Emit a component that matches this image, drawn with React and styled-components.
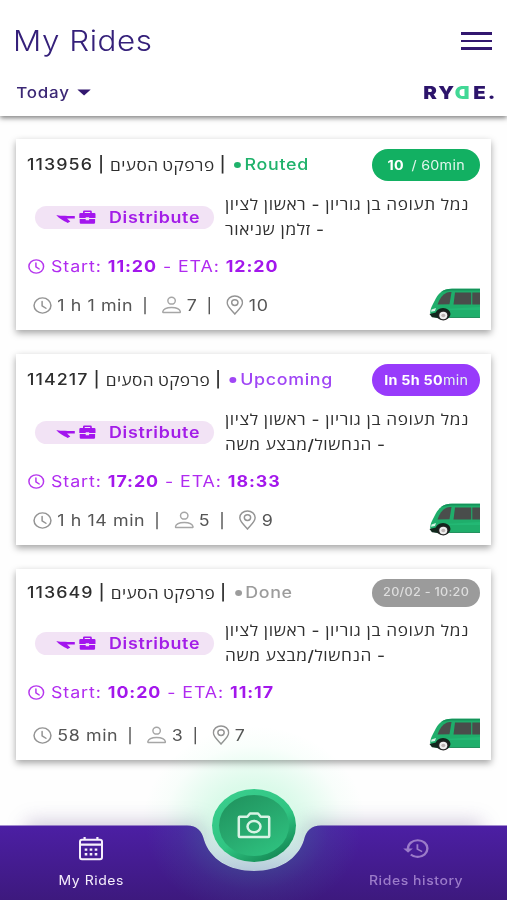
import React from "react";
import styled, { createGlobalStyle } from "styled-components";
import { MdHistory } from "react-icons/md";

const RIDES = [
  {
    id: "113956",
    company: "פרפקט הסעים",
    status: "Routed",
    statusColor: "#1fb26b",
    pillColor: "#12b062",
    pillBold: "10",
    pillGap: 3,
    pillText: " / 60min",
    route: ["נמל תעופה בן גוריון - ראשון לציון", "- זלמן שניאור"],
    start: "11:20",
    eta: "12:20",
    duration: "1 h 1 min",
    passengers: "7",
    stops: "10",
  },
  {
    id: "114217",
    company: "פרפקט הסעים",
    status: "Upcoming",
    statusColor: "#a046f5",
    pillColor: "#983bfb",
    pillBold: "In 5h 50",
    pillGap: 0,
    pillText: "min",
    route: ["נמל תעופה בן גוריון - ראשון לציון", "- הנחשול/מבצע משה"],
    start: "17:20",
    eta: "18:33",
    duration: "1 h 14 min",
    passengers: "5",
    stops: "9",
  },
  {
    id: "113649",
    company: "פרפקט הסעים",
    status: "Done",
    statusColor: "#9c9c9c",
    pillColor: "#9b9b9b",
    pillText: "20/02 - 10:20",
    small: true,
    route: ["נמל תעופה בן גוריון - ראשון לציון", "- הנחשול/מבצע משה"],
    start: "10:20",
    eta: "11:17",
    duration: "58 min",
    passengers: "3",
    stops: "7",
  },
];

const GlobalStyle = createGlobalStyle`
  * {
    box-sizing: border-box;
  }

  body {
    margin: 0;
    background: #fff;
    font-family: Inter, "Open Sans", "Liberation Sans", sans-serif;
  }

  svg {
    display: block;
    flex: none;
  }
`;

const Screen = styled.div`
  display: flex;
  flex-direction: column;
  width: 507px;
  height: 900px;
  overflow: hidden;
  background: #fefefe;
`;

const Header = styled.header`
  height: 116px;
  padding: 22px 13px 0 14px;
  background: #fff;
  box-shadow: 0 2px 5px rgba(0, 0, 0, 0.5);
`;

const HeaderRow = styled.div`
  display: flex;
  align-items: center;
  justify-content: space-between;
  height: ${(props) => props.$height}px;
`;

const Title = styled.h1`
  margin: 0 0 0 -1px;
  color: #35207a;
  font-size: 28px;
  font-weight: 300;
  letter-spacing: 0.5px;
  transform: scaleX(1.12);
  transform-origin: left;
`;

const MenuButton = styled.div`
  display: flex;
  flex-direction: column;
  gap: 5px;
  margin-right: 2px;

  span {
    width: 31px;
    height: 2.6px;
    background: #32176f;
  }
`;

const DayPicker = styled.div`
  display: flex;
  align-items: center;
  gap: 7px;
  padding-left: 2px;
  color: #3b2775;
  font-size: 15px;
  font-weight: 500;
  letter-spacing: 0.7px;
  transform: scaleX(1.13);
  transform-origin: left;
`;

const Logo = styled.div`
  display: flex;
  margin-right: -3px;
  color: #2c146b;
  font-size: 17.5px;
  font-weight: 900;
  letter-spacing: 1.7px;
  transform: scaleX(1.17);
  transform-origin: right;
`;

const FlippedLetter = styled.span`
  color: #42d896;
  letter-spacing: 0;
  margin-right: 2.6px;
  margin-left: -0.6px;
  transform: scaleX(-1);
`;

const RideList = styled.main`
  display: flex;
  flex: 1;
  flex-direction: column;
  gap: 24px;
  padding: 23px 16px 0;
`;

const Card = styled.article`
  display: flex;
  flex: none;
  flex-direction: column;
  height: 191px;
  padding: 9.5px 11px 9px;
  background: #fff;
  box-shadow: 0 3px 7px rgba(0, 0, 0, 0.36);
`;

const CardHead = styled.div`
  display: flex;
  align-items: center;
  justify-content: space-between;
`;

const RideName = styled.div`
  display: flex;
  align-items: center;
  color: #2e2e2e;
  font-size: 15.5px;
  font-weight: 500;
  letter-spacing: 0.95px;
  line-height: 20px;
  word-spacing: -0.8px;
  white-space: pre;
  transform: scaleX(1.15);
  transform-origin: left;
`;

const Company = styled.span`
  font-family: "Open Sans", "Liberation Sans", sans-serif;
  font-size: 15px;
  letter-spacing: 0.35px;
`;

const Status = styled.span`
  display: flex;
  align-items: center;
  gap: 3px;
  margin-left: 6.5px;
  color: ${(props) => props.$color};
  letter-spacing: 0.6px;

  &::before {
    content: "";
    width: 6px;
    height: 6px;
    border-radius: 50%;
    background: currentColor;
  }
`;

const Pill = styled.div`
  width: 108px;
  height: ${(props) => (props.$small ? 28 : 32)}px;
  border-radius: 16px;
  background: ${(props) => props.$color};
  color: ${(props) => (props.$small ? "#dedede" : "#e4f6ee")};
  font-size: ${(props) => (props.$small ? 11.5 : 13)}px;
  font-weight: ${(props) => (props.$small ? 500 : 400)};
  line-height: ${(props) => (props.$small ? 27 : 32)}px;
  letter-spacing: 0.25px;
  text-align: center;
  white-space: pre;
`;

const PillText = styled.span`
  display: inline-block;
  transform: scaleX(1.1);

  b {
    margin-right: ${(props) => props.$gap || 0}px;
    color: #fff;
    font-weight: 700;
  }
`;

const RouteRow = styled.div`
  display: flex;
  align-items: center;
  gap: 11px;
  height: 50px;
  margin-top: 12px;
  padding-left: 8px;
`;

const Tag = styled.div`
  display: flex;
  align-items: center;
  width: 179px;
  height: 23px;
  padding-left: 21px;
  border-radius: 12px;
  background: #f2e3f5;
  color: #a31de8;
  font-size: 15.5px;
  font-weight: 600;
  letter-spacing: 0.6px;

  span {
    margin-left: 12.7px;
    transform: scaleX(1.15);
    transform-origin: left;
  }
`;

const Route = styled.div`
  margin-top: -2px;
  color: #303030;
  direction: rtl;
  font-family: Inter, "Open Sans", "Liberation Sans", sans-serif;
  font-size: 15px;
  font-weight: 500;
  line-height: 25px;
  letter-spacing: 0.5px;
  text-align: left;
  white-space: nowrap;
  transform: scaleX(1.15);
  transform-origin: left;
`;

const TimeRow = styled.div`
  display: flex;
  align-items: center;
  gap: 6px;
  height: 20px;
  margin-top: 13.5px;
  padding-left: 1px;
  color: #b02af0;
  font-size: 15.5px;
  letter-spacing: 0.8px;
  white-space: pre;

  div {
    transform: scaleX(1.15);
    transform-origin: left;
  }

  b {
    color: #a317ec;
    font-weight: 700;
  }
`;

const StatsRow = styled.div`
  display: flex;
  align-items: flex-end;
  justify-content: space-between;
  margin-top: auto;
`;

const Stats = styled.div`
  display: flex;
  align-items: center;
  height: 32px;
  margin-left: 6px;
  color: #555;
  font-size: 15.5px;
  letter-spacing: 0.5px;
  transform: scaleX(1.15);
  transform-origin: left;
`;

const StatValue = styled.span`
  margin: 0 7.8px 0 4.7px;
`;

const Divider = styled.span`
  width: 5px;
  margin-right: 12.2px;
  color: #444;
  font-size: 14.5px;
  letter-spacing: 0;
  text-align: center;
`;

const BottomNav = styled.nav`
  position: relative;
  display: grid;
  flex: none;
  grid-template-columns: 182px 1fr 182px;
  height: 75px;
`;

const NavShape = styled.svg`
  position: absolute;
  left: 0;
  bottom: 0;
  pointer-events: none;
`;

const NavItem = styled.div`
  position: relative;
  display: flex;
  flex-direction: column;
  align-items: center;
  padding-top: 11px;
  color: ${(props) => (props.$active ? "#f5eefc" : "#9b7bc9")};
  font-size: 12.5px;
  font-weight: ${(props) => (props.$active ? 400 : 500)};
  letter-spacing: 0.5px;

  svg {
    height: 25px;
  }

  span {
    margin-top: 12px;
    transform: scaleX(1.12);
  }
`;

const ScanButton = styled.div`
  position: absolute;
  top: -36px;
  left: 212px;
  display: flex;
  align-items: center;
  justify-content: center;
  width: 84px;
  height: 73px;
  border-radius: 50%;
  background: linear-gradient(150deg, #3bcf8f, #30c582 55%, #178f59 85%);

  &::before {
    content: "";
    position: absolute;
    inset: 6px 7px;
    border-radius: 50%;
    background: linear-gradient(150deg, #1f905c, #27a76d 45%, #30c783);
  }

  svg {
    position: relative;
  }
`;

const ClockIcon = ({ width, height, strokeWidth, color }) => (
  <svg
    width={width}
    height={height}
    viewBox="0 0 20 20"
    preserveAspectRatio="none"
    fill="none"
    stroke={color}
    strokeWidth={strokeWidth}
    strokeLinecap="round"
    strokeLinejoin="round"
  >
    <circle cx="10" cy="10" r="8.9" />
    <path d="M9.600 5.200v5.300l4 2.800" />
  </svg>
);

const PersonIcon = () => (
  <svg width="17" height="18" viewBox="0 0 20 18" preserveAspectRatio="none" fill="none" stroke="#a6a6a6" strokeWidth="1.5">
    <ellipse cx="10" cy="4.700" rx="3.800" ry="3.400" />
    <path d="M1 15.600c.6-2.600 4.200-4.200 9-4.200s8.400 1.600 9 4.200c.1.700-.3 1-1 1H2c-.7 0-1.100-.3-1-1z" />
  </svg>
);

const PinIcon = () => (
  <svg width="15" height="20" viewBox="0 0 18 20" preserveAspectRatio="none" fill="none" stroke="#949494" strokeWidth="1.500">
    <path d="M9 19C6.500 16 1 11.800 1 7.800 1 3.900 4.600 1 9 1s8 2.900 8 6.800c0 4-5.500 8.200-8 11.200z" />
    <ellipse cx="9" cy="7.600" rx="3.300" ry="2.900" />
  </svg>
);

const TagIcon = () => (
  <svg width="40" height="16" viewBox="0 0 40 16" fill="#a315ee">
    <path d="M.3 5.100c2.500 1 8 .8 18.500 1v2.300H11l3.300 3.200-2.600 1.300C7.500 11.200 2.300 8 .3 5.100z" />
    <path
      fillRule="evenodd"
      d="M27 3V1.700Q27 .5 28.300.5h6.200q1.300 0 1.300 1.200V3h2.500q1.200 0 1.200 1.200v3.900h-6.400V7.200h-3.400v.9h-6.400V4.200Q23.300 3 24.500 3zm1.700 0h5.500V2h-5.500zM23.700 9h6v1.300h3.400V9h6v3.600q0 1.200-1.200 1.200h-13q-1.200 0-1.200-1.200z"
    />
  </svg>
);

const VanIcon = () => (
  <svg width="51" height="33" viewBox="0 0 51 33">
    <path d="M51 .8H23C13 .8 9 6 5.500 13 3 18 1.500 20 1.200 25l1.500 3.500L9 30h42z" fill="#1fae6b" />
    <path d="M51 .8H23C18 .8 15 2 12 4l10-1.500h29z" fill="#14935a" />
    <path d="M4 21.500 51 19v3H8z" fill="#23b874" />
    <path d="M8.500 16.500c2-6 5-10 9-11.800 2-.8 5-.8 5-.8L20.500 16.200z" fill="#4a4e4c" />
    <path d="M26 4.500h16.200v12.100H24.500zM43.300 4.500H51v12.100h-7.700z" fill="#494d4b" />
    <path d="M2.500 21.500 7 20l-1 3-4 .8z" fill="#d5f5e5" />
    <path d="M.5 26 7 24.500 9 30l-6-.7z" fill="#12271d" />
    <ellipse cx="14" cy="26" rx="7.500" ry="6" fill="#14251d" />
    <ellipse cx="14.300" cy="27.500" rx="5.600" ry="5.100" fill="#242424" />
    <ellipse cx="14.300" cy="27.500" rx="4" ry="3.700" fill="#eee" />
    <ellipse cx="14.300" cy="27.500" rx="2" ry="1.800" fill="#bcb4b4" />
    <path d="M20 29.500h31" stroke="#25915f" />
  </svg>
);

const CalendarIcon = () => (
  <svg width="24" height="25" viewBox="0 -1 24 25" fill="none" stroke="#f7f0fc" strokeWidth="2">
    <rect x="1" y="2.800" width="22" height="19.500" rx="2" />
    <path d="M1 7.600h22M5.600 0v3M18.400 0v3" strokeWidth="2.200" />
    <path d="M5.700 12.600h12.600M5.700 17.300h12.600" strokeWidth="2.400" strokeDasharray="2.600 2.400" />
  </svg>
);

const CameraIcon = () => (
  <svg width="34" height="27" viewBox="0 0 34 27" fill="none" stroke="#d8f3e5" strokeWidth="2.500">
    <path d="M2.800 4.700h7.500L13 1.500h8l2.700 3.200h7.500q1 0 1 1v18.300q0 1-1 1H2.800q-1 0-1-1V5.700q0-1 1-1z" strokeLinejoin="round" />
    <ellipse cx="17" cy="14.600" rx="6.500" ry="5.700" />
  </svg>
);

const NavBackground = () => (
  <NavShape width="507" height="190" viewBox="0 0 507 190">
    <defs>
      <linearGradient id="nav" x1="0" y1="0" x2="0" y2="1">
        <stop offset="0" stopColor="#4c1fa4" />
        <stop offset="1" stopColor="#3d197e" />
      </linearGradient>
      <radialGradient id="glow">
        <stop offset="0.4" stopColor="#52eb9a" stopOpacity="0.2" />
        <stop offset="0.6" stopColor="#52eb9a" stopOpacity="0.12" />
        <stop offset="0.8" stopColor="#52eb9a" stopOpacity="0.035" />
        <stop offset="1" stopColor="#52eb9a" stopOpacity="0" />
      </radialGradient>
      <radialGradient id="navGlow">
        <stop offset="0.4" stopColor="#3f7f9c" stopOpacity="0.36" />
        <stop offset="0.7" stopColor="#3f7f9c" stopOpacity="0.12" />
        <stop offset="1" stopColor="#3f7f9c" stopOpacity="0" />
      </radialGradient>
      <linearGradient id="ring" x1="0" y1="0" x2="0" y2="1">
        <stop offset="0" stopColor="#c1d8e0" stopOpacity="0" />
        <stop offset="1" stopColor="#b5c9da" />
      </linearGradient>
      <filter id="soft" x="-20%" y="-100%" width="140%" height="300%">
        <feGaussianBlur stdDeviation="10" />
      </filter>
      <clipPath id="bar">
        <path d="M0 115.500H187C197 115.500 202 121 204 130C210 149 229 161 254 161S298 149 304 130C306 121 311 115.500 321 115.500H507V190H0z" />
      </clipPath>
    </defs>
    <rect x="26" y="112" width="180" height="26" fill="#79659c" opacity=".36" filter="url(#soft)" />
    <rect x="302" y="112" width="180" height="26" fill="#79659c" opacity=".36" filter="url(#soft)" />
    <ellipse cx="254" cy="114" rx="112" ry="98" fill="url(#glow)" />
    <path d="M204 115h100v15c-6 18-25 31-50 31s-44-13-50-31z" fill="url(#ring)" />
    <g clipPath="url(#bar)">
      <rect y="115" width="507" height="75" fill="url(#nav)" />
      <ellipse cx="254" cy="120" rx="108" ry="86" fill="url(#navGlow)" />
    </g>
  </NavShape>
);

const RideCard = ({ ride }) => (
  <Card>
    <CardHead>
      <RideName>
        {ride.id} | <Company dir="rtl">{ride.company}</Company> |
        <Status $color={ride.statusColor}>{ride.status}</Status>
      </RideName>
      <Pill $color={ride.pillColor} $small={ride.small}>
        <PillText $gap={ride.pillGap}>
          {ride.pillBold && <b>{ride.pillBold}</b>}
          {ride.pillText}
        </PillText>
      </Pill>
    </CardHead>
    <RouteRow>
      <Tag>
        <TagIcon />
        <span>Distribute</span>
      </Tag>
      <Route>
        {ride.route.map((line) => (
          <div key={line}>{line}</div>
        ))}
      </Route>
    </RouteRow>
    <TimeRow>
      <ClockIcon width={16.5} height={15} strokeWidth={1.8} color="#b637ee" />
      <div>
        Start: <b>{ride.start}</b> - ETA: <b>{ride.eta}</b>
      </div>
    </TimeRow>
    <StatsRow>
      <Stats>
        <ClockIcon width={16.5} height={17} strokeWidth={1.6} color="#949494" />
        <StatValue>{ride.duration}</StatValue>
        <Divider>|</Divider>
        <PersonIcon />
        <StatValue>{ride.passengers}</StatValue>
        <Divider>|</Divider>
        <PinIcon />
        <StatValue>{ride.stops}</StatValue>
      </Stats>
      <VanIcon />
    </StatsRow>
  </Card>
);

const App = () => {
  return (
    <Screen>
      <GlobalStyle />
      <Header>
        <HeaderRow $height={38}>
          <Title>My Rides</Title>
          <MenuButton>
            <span />
            <span />
            <span />
          </MenuButton>
        </HeaderRow>
        <HeaderRow $height={64}>
          <DayPicker>
            Today
            <svg width="12" height="7" viewBox="0 0 12 7" fill="#32176f">
              <path d="M0 .5h12L6 6.500z" />
            </svg>
          </DayPicker>
          <Logo>
            RY<FlippedLetter>D</FlippedLetter>E.
          </Logo>
        </HeaderRow>
      </Header>
      <RideList>
        {RIDES.map((ride) => (
          <RideCard key={ride.id} ride={ride} />
        ))}
      </RideList>
      <BottomNav>
        <NavBackground />
        <NavItem $active>
          <CalendarIcon />
          <span>My Rides</span>
        </NavItem>
        <div />
        <NavItem>
          <MdHistory size={29} preserveAspectRatio="none" />
          <span>Rides history</span>
        </NavItem>
        <ScanButton>
          <CameraIcon />
        </ScanButton>
      </BottomNav>
    </Screen>
  );
};

export default App;
